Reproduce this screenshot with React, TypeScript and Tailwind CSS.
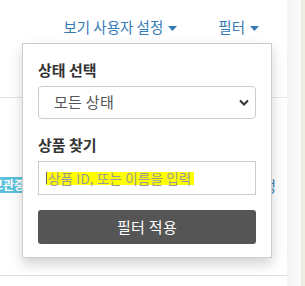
import React from "react";

const font = { fontFamily: '"Noto Sans CJK KR", "Noto Sans", sans-serif' };

function Caret() {
  return (
    <svg width="9" height="5" viewBox="0 0 9 5" className="ml-[5px] mt-[2px]">
      <path d="M0 0 L9 0 L4.5 5 Z" fill="#337ab7" />
    </svg>
  );
}

export default function App() {
  return (
    <div className="w-[305px] h-[286px] overflow-hidden bg-white flex" style={font}>
      <div className="relative w-[287px] h-full flex flex-col">
        <div className="h-[44px] flex items-center justify-end gap-[41px] pr-[28px] pt-[10px] text-[14.5px] text-[#337ab7] leading-none">
          <div className="flex items-center">보기 사용자 설정<Caret /></div>
          <div className="flex items-center">필터<Caret /></div>
        </div>
        <div className="mt-[53px] border-t border-[#e5e5e5]" />
        <div className="mt-[79px] flex items-center justify-between h-[16px]">
          <span className="ml-[-12px] bg-[#5bc0de] text-white text-[12px] font-bold leading-[16px] px-[4px]">보관중</span>
          <span className="mr-[11px] text-[#337ab7] text-[15px] leading-none">수정</span>
        </div>
        <div className="mt-[82px] border-t border-[#e0e0e0]" />

        <div className="absolute left-[22px] top-[43px] w-[250px] h-[215px] bg-white border border-[#ccc] shadow-[0_6px_12px_rgba(0,0,0,0.175)] px-[15px] pt-[15px]">
          <div className="text-[15px] font-bold text-[#333] leading-[22px]">상태 선택</div>
          <div className="mt-[5px] h-[33px] border border-[#ccc] rounded-[4px] flex items-center justify-between pl-[15px] pr-[6px] text-[15px] text-[#555]">
            <span className="tracking-[0.3px]">모든 상태</span>
            <svg width="10" height="7" viewBox="0 0 10 7">
              <path d="M1 1.5 L5 5.5 L9 1.5" stroke="#333" strokeWidth="2" fill="none" />
            </svg>
          </div>
          <div className="mt-[15px] text-[15px] font-bold text-[#333] leading-[22px]">상품 찾기</div>
          <div className="mt-[5px] h-[34px] border border-[#ccc] flex items-center pl-[7px]">
            <span className="bg-[#ffff00] text-[#999] text-[13.5px] tracking-[0.15px] leading-[13px] h-[13px] pr-[3px] flex items-center">
              <span className="w-px h-[12px] bg-[#666] mr-px" />상품 ID, 또는 이름을 입력
            </span>
          </div>
          <div className="mt-[15px] h-[34px] bg-[#555] rounded-[3px] flex items-center justify-center text-white text-[15px] tracking-[0.3px]">
            필터 적용
          </div>
        </div>
      </div>
      <div className="w-[14px] h-full bg-gradient-to-r from-[#f4f4f4] to-[#fbfbfb]" />
      <div className="w-[4px] h-full bg-[#efece4]" />
    </div>
  );
}
